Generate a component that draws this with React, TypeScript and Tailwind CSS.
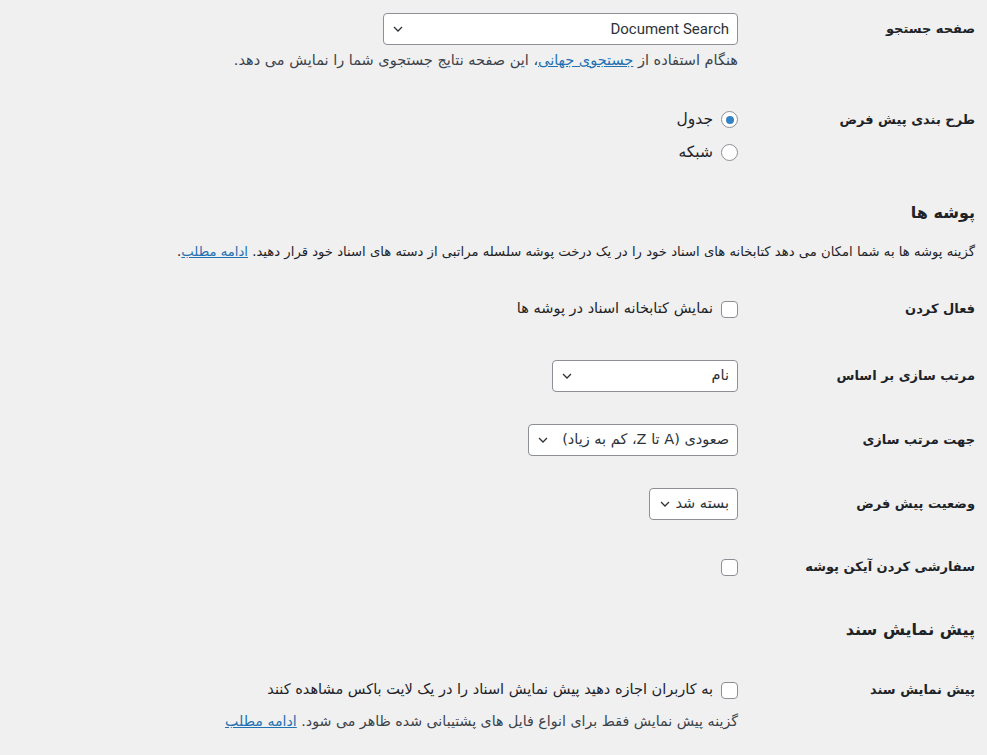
import React from "react"

const fa = { fontFamily: "'DejaVu Sans', 'Noto Sans', sans-serif" }

function Chevron() {
  return (
    <svg width="10" height="6" viewBox="0 0 10 6" className="shrink-0">
      <path d="M1 1l4 4 4-4" fill="none" stroke="#2c3338" strokeWidth="1.3" />
    </svg>
  )
}

function Select({ value, width, latin }: { value: string; width: string; latin?: boolean }) {
  return (
    <div
      className={`flex h-[32px] ${width} items-center justify-between rounded-[4px] border border-[#8c8f94] bg-white pl-[9px] pr-[8px] text-[14.5px] text-[#2c3338]`}
    >
      <span style={latin ? { fontFamily: "Roboto, 'Liberation Sans', sans-serif", fontSize: "15px" } : undefined}>{value}</span>
      <Chevron />
    </div>
  )
}

function Checkbox() {
  return <span className="inline-block h-[17px] w-[17px] shrink-0 rounded-[4px] border border-[#8c8f94] bg-white" />
}

function Radio({ checked }: { checked?: boolean }) {
  return (
    <span className="flex h-[17px] w-[17px] shrink-0 items-center justify-center rounded-full border border-[#8c8f94] bg-white">
      {checked && <span className="h-[8px] w-[8px] rounded-full bg-[#3582c4]" />}
    </span>
  )
}

function Label({ children }: { children: React.ReactNode }) {
  return <div className="w-[237px] shrink-0 text-[13px] font-bold text-[#1d2327]">{children}</div>
}

function Row({ label, mt, children }: { label: string; mt: string; children: React.ReactNode }) {
  return (
    <div className={`flex h-[32px] items-center ${mt}`}>
      <Label>{label}</Label>
      {children}
    </div>
  )
}

export default function App() {
  return (
    <div dir="rtl" style={fa} className="min-h-[755px] w-[987px] bg-[#f0f0f1] pr-[12px] text-[14.5px] text-[#1d2327]">
      <div className="pt-[13px]">
        <Row label="صفحه جستجو" mt="mt-0">
          <Select value="Document Search" width="w-[355px]" latin />
        </Row>
        <div className="mr-[237px] mt-[5px] h-[20px] whitespace-nowrap leading-[20px] text-[14.5px] text-[#3c434a]">
          هنگام استفاده از{" "}
          <a className="text-[#2271b1] underline">جستجوی جهانی</a>، این صفحه نتایج جستجوی شما را نمایش می دهد.
        </div>
      </div>

      <div className="mt-[33px] flex">
        <div className="flex h-[33px] items-center">
          <Label>طرح بندی پیش فرض</Label>
        </div>
        <div className="flex flex-col">
          <div className="flex h-[33px] items-center gap-[8px] text-[15.5px]">
            <Radio checked />
            <span>جدول</span>
          </div>
          <div className="flex h-[33px] items-center gap-[8px] text-[15.5px]">
            <Radio />
            <span>شبکه</span>
          </div>
        </div>
      </div>

      <h2 className="mt-[32px] h-[24px] text-[16px] font-bold leading-[24px]">پوشه ها</h2>
      <p className="mt-[17px] h-[20px] whitespace-nowrap text-[13.2px] leading-[20px]">
        گزینه پوشه ها به شما امکان می دهد کتابخانه های اسناد خود را در یک درخت پوشه سلسله مراتبی از دسته های اسناد خود قرار دهید.{" "}
        <a className="text-[#2271b1] underline">ادامه مطلب</a>.
      </p>

      <Row label="فعال کردن" mt="mt-[31px]">
        <div className="flex items-center gap-[8px]">
          <Checkbox />
          <span>نمایش کتابخانه اسناد در پوشه ها</span>
        </div>
      </Row>
      <Row label="مرتب سازی بر اساس" mt="mt-[35px]">
        <Select value="نام" width="w-[186px]" />
      </Row>
      <Row label="جهت مرتب سازی" mt="mt-[32px]">
        <Select value="صعودی (A تا Z، کم به زیاد)" width="w-[210px]" />
      </Row>
      <Row label="وضعیت پیش فرض" mt="mt-[32px]">
        <div className="flex h-[32px] w-[89px] items-center gap-[6px] rounded-[4px] border border-[#8c8f94] bg-white pr-[8px] text-[14.5px] text-[#2c3338]">
          <span>بسته شد</span>
          <Chevron />
        </div>
      </Row>
      <Row label="سفارشی کردن آیکن پوشه" mt="mt-[31px]">
        <Checkbox />
      </Row>

      <h2 className="mt-[35px] h-[24px] text-[16px] font-bold leading-[24px]">پیش نمایش سند</h2>

      <Row label="پیش نمایش سند" mt="mt-[32px]">
        <div className="flex items-center gap-[8px]">
          <Checkbox />
          <span className="whitespace-nowrap">به کاربران اجازه دهید پیش نمایش اسناد را در یک لایت باکس مشاهده کنند</span>
        </div>
      </Row>
      <div className="mr-[237px] mt-[5px] h-[20px] whitespace-nowrap leading-[20px] text-[14.2px] text-[#3c434a]">
        گزینه پیش نمایش فقط برای انواع فایل های پشتیبانی شده ظاهر می شود.{" "}
        <a className="text-[#2271b1] underline">ادامه مطلب</a>
      </div>
    </div>
  )
}
